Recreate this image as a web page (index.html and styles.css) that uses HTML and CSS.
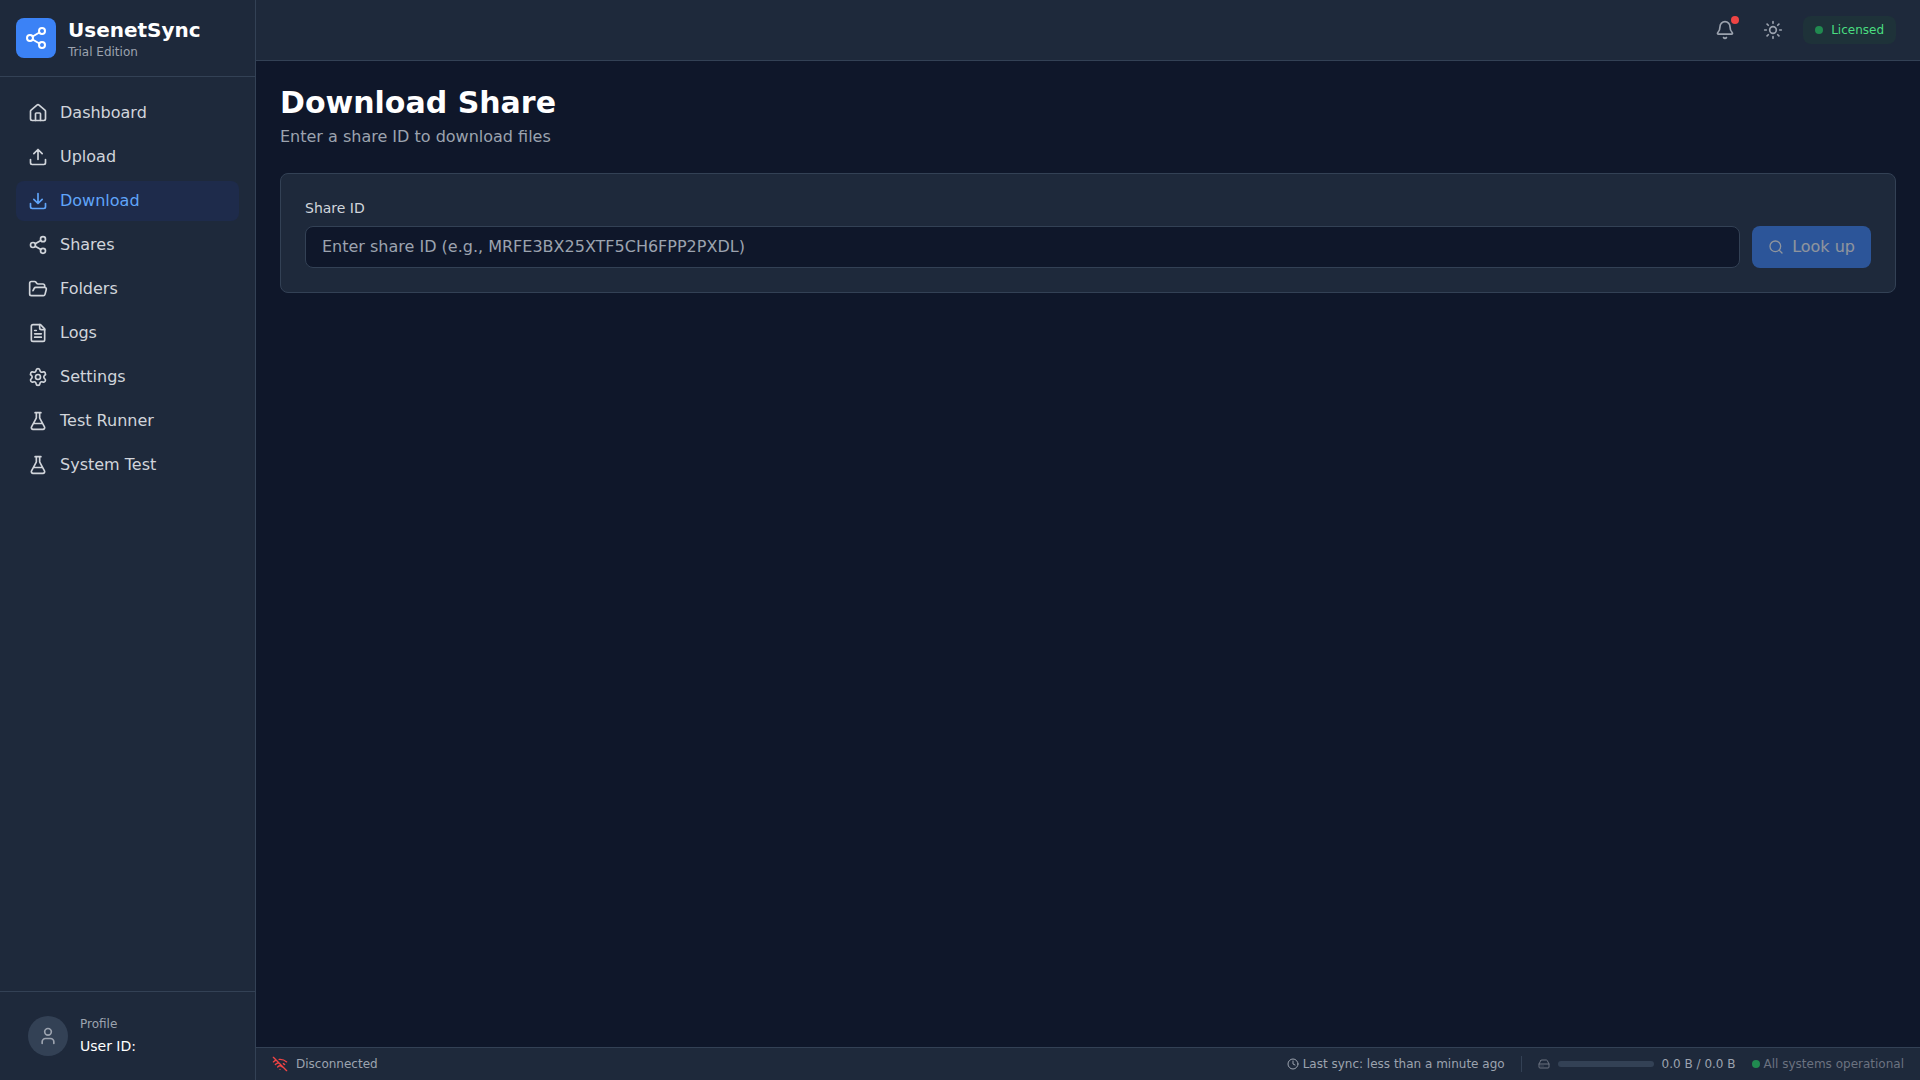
FILE: index.html
```html
<!DOCTYPE html>
<html lang="en">
<head>
<meta charset="utf-8">
<meta name="viewport" content="width=device-width, initial-scale=1">
<title>UsenetSync</title>
<link rel="stylesheet" href="styles.css">
</head>
<body>
<svg class="sprite" aria-hidden="true">
  <symbol id="share" viewBox="0 0 24 24"><circle cx="18" cy="5" r="3"/><circle cx="6" cy="12" r="3"/><circle cx="18" cy="19" r="3"/><path d="M8.59 13.51l6.83 3.98M15.41 6.51l-6.82 3.98"/></symbol>
  <symbol id="home" viewBox="0 0 24 24"><path d="M15 21v-8a1 1 0 0 0-1-1h-4a1 1 0 0 0-1 1v8"/><path d="M3 10a2 2 0 0 1 .709-1.528l7-5.999a2 2 0 0 1 2.582 0l7 5.999A2 2 0 0 1 21 10v9a2 2 0 0 1-2 2H5a2 2 0 0 1-2-2z"/></symbol>
  <symbol id="upload" viewBox="0 0 24 24"><path d="M21 15v4a2 2 0 0 1-2 2H5a2 2 0 0 1-2-2v-4"/><path d="M17 8l-5-5-5 5M12 3v12"/></symbol>
  <symbol id="download" viewBox="0 0 24 24"><path d="M21 15v4a2 2 0 0 1-2 2H5a2 2 0 0 1-2-2v-4"/><path d="M7 10l5 5 5-5M12 15V3"/></symbol>
  <symbol id="folder" viewBox="0 0 24 24"><path d="M6 14l1.5-2.9A2 2 0 0 1 9.24 10H20a2 2 0 0 1 1.94 2.5l-1.54 6a2 2 0 0 1-1.95 1.5H4a2 2 0 0 1-2-2V5a2 2 0 0 1 2-2h3.9a2 2 0 0 1 1.69.9l.81 1.2a2 2 0 0 0 1.67.9H18a2 2 0 0 1 2 2v2"/></symbol>
  <symbol id="file" viewBox="0 0 24 24"><path d="M15 2H6a2 2 0 0 0-2 2v16a2 2 0 0 0 2 2h12a2 2 0 0 0 2-2V7Z"/><path d="M14 2v4a2 2 0 0 0 2 2h4M10 9H8M16 13H8M16 17H8"/></symbol>
  <symbol id="settings" viewBox="0 0 24 24"><path d="M9.671 4.136a2.34 2.34 0 0 1 4.659 0 2.34 2.34 0 0 0 3.319 1.915 2.34 2.34 0 0 1 2.33 4.033 2.34 2.34 0 0 0 0 3.831 2.34 2.34 0 0 1-2.33 4.033 2.34 2.34 0 0 0-3.319 1.915 2.34 2.34 0 0 1-4.659 0 2.34 2.34 0 0 0-3.32-1.915 2.34 2.34 0 0 1-2.33-4.033 2.34 2.34 0 0 0 0-3.831A2.34 2.34 0 0 1 6.35 6.051a2.34 2.34 0 0 0 3.319-1.915"/><circle cx="12" cy="12" r="3"/></symbol>
  <symbol id="flask" viewBox="0 0 24 24"><path d="M14 2v6a2 2 0 0 0 .245.96l5.51 10.08A2 2 0 0 1 18 22H6a2 2 0 0 1-1.755-2.96l5.51-10.08A2 2 0 0 0 10 8V2M6.453 15h11.094M8.5 2h7"/></symbol>
  <symbol id="user" viewBox="0 0 24 24"><path d="M19 21v-2a4 4 0 0 0-4-4H9a4 4 0 0 0-4 4v2"/><circle cx="12" cy="7" r="4"/></symbol>
  <symbol id="bell" viewBox="0 0 24 24"><path d="M10.268 21a2 2 0 0 0 3.464 0"/><path d="M3.262 15.326A1 1 0 0 0 4 17h16a1 1 0 0 0 .74-1.673C19.41 13.956 18 12.499 18 8A6 6 0 0 0 6 8c0 4.499-1.411 5.956-2.738 7.326"/></symbol>
  <symbol id="sun" viewBox="0 0 24 24"><circle cx="12" cy="12" r="4"/><path d="M12 2v2M12 20v2M4.93 4.93l1.41 1.41M17.66 17.66l1.41 1.41M2 12h2M20 12h2M6.34 17.66l-1.41 1.41M19.07 4.93l-1.41 1.41"/></symbol>
  <symbol id="search" viewBox="0 0 24 24"><circle cx="11" cy="11" r="8"/><path d="M21 21l-4.34-4.34"/></symbol>
  <symbol id="wifi-off" viewBox="0 0 24 24"><path d="M12 20h.01M8.5 16.429a5 5 0 0 1 7 0M5 12.859a10 10 0 0 1 5.17-2.69M19 12.859a10 10 0 0 0-2.007-1.523M2 8.82a15 15 0 0 1 4.177-2.643M22 8.82a15 15 0 0 0-11.288-3.764M2 2l20 20"/></symbol>
  <symbol id="clock" viewBox="0 0 24 24"><circle cx="12" cy="12" r="10"/><path d="M12 6v6l4 2"/></symbol>
  <symbol id="drive" viewBox="0 0 24 24"><path d="M22 12H2M5.45 5.11L2 12v6a2 2 0 0 0 2 2h16a2 2 0 0 0 2-2v-6l-3.45-6.89A2 2 0 0 0 16.76 4H7.24a2 2 0 0 0-1.79 1.11zM6 16h.01M10 16h.01"/></symbol>
</svg>
<div class="app">
  <aside class="sidebar">
    <div class="brand">
      <span class="logo"><svg class="icon icon-lg"><use href="#share"/></svg></span>
      <div>
        <div class="brand-name">UsenetSync</div>
        <div class="caption">Trial Edition</div>
      </div>
    </div>
    <nav class="nav">
      <a class="nav-item" href="#"><svg class="icon"><use href="#home"/></svg>Dashboard</a>
      <a class="nav-item" href="#"><svg class="icon"><use href="#upload"/></svg>Upload</a>
      <a class="nav-item active" href="#" aria-current="page"><svg class="icon"><use href="#download"/></svg>Download</a>
      <a class="nav-item" href="#"><svg class="icon"><use href="#share"/></svg>Shares</a>
      <a class="nav-item" href="#"><svg class="icon"><use href="#folder"/></svg>Folders</a>
      <a class="nav-item" href="#"><svg class="icon"><use href="#file"/></svg>Logs</a>
      <a class="nav-item" href="#"><svg class="icon"><use href="#settings"/></svg>Settings</a>
      <a class="nav-item" href="#"><svg class="icon"><use href="#flask"/></svg>Test Runner</a>
      <a class="nav-item" href="#"><svg class="icon"><use href="#flask"/></svg>System Test</a>
    </nav>
    <div class="profile">
      <span class="avatar"><svg class="icon"><use href="#user"/></svg></span>
      <div class="profile-text">
        <div class="caption">Profile</div>
        <div class="user-id">User ID:</div>
      </div>
    </div>
  </aside>
  <div class="content">
    <header class="topbar">
      <button class="icon-button" type="button" aria-label="Notifications"><svg class="icon"><use href="#bell"/></svg><span class="badge"></span></button>
      <button class="icon-button" type="button" aria-label="Toggle theme"><svg class="icon"><use href="#sun"/></svg></button>
      <div class="license"><span class="dot"></span>Licensed</div>
    </header>
    <main class="page">
      <div class="heading">
        <h1>Download Share</h1>
        <p>Enter a share ID to download files</p>
      </div>
      <form class="card">
        <label for="share-id">Share ID</label>
        <div class="lookup">
          <input id="share-id" type="text" placeholder="Enter share ID (e.g., MRFE3BX25XTF5CH6FPP2PXDL)">
          <button class="primary" type="submit" disabled><svg class="icon icon-sm"><use href="#search"/></svg>Look up</button>
        </div>
      </form>
    </main>
    <footer class="statusbar">
      <div class="connection"><svg class="icon icon-sm"><use href="#wifi-off"/></svg>Disconnected</div>
      <div class="status-right">
        <div class="status-item"><svg class="icon icon-xs"><use href="#clock"/></svg>Last sync: less than a minute ago</div>
        <span class="divider"></span>
        <div class="storage"><svg class="icon icon-xs"><use href="#drive"/></svg><span class="meter"></span>0.0 B / 0.0 B</div>
        <div class="status-item muted"><span class="dot"></span>All systems operational</div>
      </div>
    </footer>
  </div>
</div>
</body>
</html>
```
FILE: styles.css
```css
*, *::before, *::after { box-sizing: border-box; }
body {
  margin: 0;
  background: #0f172a;
  color: #fff;
  font: 16px/24px "DejaVu Sans", sans-serif;
}
h1, p { margin: 0; }
button, input { font: inherit; }
.sprite { display: none; }
.icon {
  display: block;
  flex: none;
  width: 20px;
  height: 20px;
  fill: none;
  stroke: currentColor;
  stroke-width: 2;
  stroke-linecap: round;
  stroke-linejoin: round;
}
.icon-lg { width: 24px; height: 24px; }
.icon-sm { width: 16px; height: 16px; }
.icon-xs { width: 12px; height: 12px; }
.caption { color: #9ca3af; font-size: 12px; line-height: 16px; }

.app { display: flex; min-height: 100vh; }
.sidebar {
  display: flex;
  flex-direction: column;
  flex: none;
  width: 256px;
  background: #1e293b;
  border-right: 1px solid #334155;
}
.brand {
  display: flex;
  align-items: center;
  gap: 12px;
  padding: 16px;
  border-bottom: 1px solid #334155;
}
.logo, .avatar {
  display: flex;
  align-items: center;
  justify-content: center;
  width: 40px;
  height: 40px;
}
.logo { border-radius: 8px; background: #3b82f6; }
.brand-name { font-size: 20px; line-height: 28px; font-weight: 700; }
.nav {
  display: flex;
  flex-direction: column;
  flex: 1;
  gap: 4px;
  padding: 16px;
}
.nav-item {
  display: flex;
  align-items: center;
  gap: 12px;
  padding: 8px 12px;
  border-radius: 8px;
  color: #d1d5db;
  text-decoration: none;
}
.nav-item.active { background: #1e2b4b; color: #60a5fa; }
.profile {
  display: flex;
  align-items: center;
  gap: 12px;
  padding: 24px 28px;
  border-top: 1px solid #334155;
}
.avatar { border-radius: 50%; background: #334155; color: #9ca3af; }
.profile-text { display: grid; gap: 4px; }
.user-id { font-size: 14px; line-height: 20px; }

.content { display: flex; flex: 1; flex-direction: column; min-width: 0; }
.topbar {
  display: flex;
  align-items: center;
  justify-content: flex-end;
  gap: 12px;
  padding: 12px 24px;
  background: #1e293b;
  border-bottom: 1px solid #334155;
}
.icon-button {
  position: relative;
  padding: 8px;
  border: 0;
  border-radius: 8px;
  background: transparent;
  color: #9ca3af;
}
.badge {
  position: absolute;
  top: 4px;
  right: 4px;
  width: 8px;
  height: 8px;
  border-radius: 50%;
  background: #ef4444;
}
.dot { width: 8px; height: 8px; border-radius: 50%; background: #218a50; }
.license {
  display: flex;
  align-items: center;
  gap: 8px;
  padding: 6px 12px;
  border-radius: 8px;
  background: #1e3239;
  color: #4ade80;
  font-size: 12px;
  line-height: 16px;
}

.page { display: flex; flex: 1; flex-direction: column; gap: 24px; padding: 24px; }
.heading { display: grid; gap: 4px; color: #9ca3af; }
h1 { color: #fff; font-size: 30px; line-height: 36px; }
.card {
  display: grid;
  gap: 8px;
  padding: 24px;
  border: 1px solid #334155;
  border-radius: 8px;
  background: #1e293b;
}
.card label { color: #d1d5db; font-size: 14px; line-height: 20px; }
.lookup { display: flex; gap: 12px; }
.lookup input {
  flex: 1;
  min-width: 0;
  padding: 8px 16px;
  border: 1px solid #334155;
  border-radius: 8px;
  background: #0f172a;
  color: #fff;
}
.lookup input::placeholder { color: #9ca3af; opacity: 1; }
.primary {
  display: flex;
  align-items: center;
  gap: 8px;
  padding: 8px 16px;
  border: 0;
  border-radius: 8px;
  background: #3b82f6;
  color: #fff;
}
.primary:disabled { opacity: 0.5; }

.statusbar {
  display: flex;
  align-items: center;
  justify-content: space-between;
  padding: 8px 16px;
  background: #1e293b;
  border-top: 1px solid #334155;
  color: #9ca3af;
  font-size: 12px;
  line-height: 16px;
}
.connection, .storage { display: flex; align-items: center; gap: 8px; }
.connection .icon { color: #ef4444; }
.status-right { display: flex; align-items: center; gap: 16px; }
.status-item { display: flex; align-items: center; gap: 4px; }
.muted { color: #6b7280; }
.divider { width: 1px; height: 16px; background: #334155; }
.storage .icon { color: #6b7280; }
.meter { width: 96px; height: 6px; border-radius: 3px; background: #334155; }
```
